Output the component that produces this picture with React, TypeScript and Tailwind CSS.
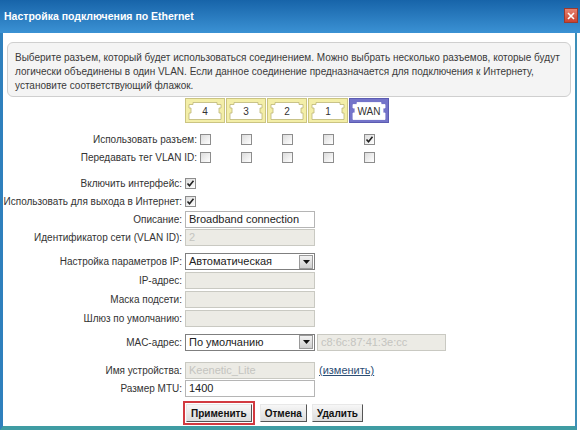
import React from "react";

const Check = ({ checked = false }: { checked?: boolean }) => (
  <span className="w-[11px] h-[11px] border border-[#8d8d8d] bg-gradient-to-br from-[#dcdcdc] to-white flex items-center justify-center">
    {checked && (
      <svg width="9" height="9" viewBox="0 0 9 9">
        <path d="M1.5 4.5 L3.5 6.8 L7.5 1.8" fill="none" stroke="#222" strokeWidth="1.6" />
      </svg>
    )}
  </span>
);

const Port = ({ label, wan = false }: { label: string; wan?: boolean }) => (
  <svg width="40" height="25" viewBox="0 0 40 25">
    <rect x="0.5" y="0.5" width="39" height="24" fill={wan ? "#7474c9" : "#f3eea8"} stroke={wan ? "#5c5cb2" : "#cbc482"} />
    <path
      d="M4 6.5 H8 V4.5 H32 V6.5 H36 V10 H34 V15 H36 V21.5 H4 V15 H6 V10 H4 Z"
      fill="#fff"
      stroke={wan ? "#ffffff" : "#bdb576"}
      strokeWidth="0.8"
    />
    <text x="20" y="17" textAnchor="middle" fontSize="10" fill="#333" fontFamily="Liberation Sans, Arial, sans-serif">
      {label}
    </text>
  </svg>
);

const Input = ({ value = "", disabled = false, w = "w-[130px]" }: { value?: string; disabled?: boolean; w?: string }) => (
  <div
    className={`${w} h-[17px] flex items-center px-[3px] border text-[11px] whitespace-nowrap overflow-hidden ${
      disabled ? "bg-[#ecebe5] border-[#c9c9c2] text-[#c4c4c0]" : "bg-white border-[#b5b5b5] text-[#222]"
    }`}
  >
    {value}
  </div>
);

const Select = ({ value }: { value: string }) => (
  <div className="w-[130px] h-[17px] flex items-center border border-[#7f7f7f] bg-white">
    <span className="flex-1 pl-[3px] text-[11px] text-[#222]">{value}</span>
    <span className="w-[14px] h-[14px] mr-[1px] flex items-center justify-center bg-gradient-to-b from-[#f2f2f2] to-[#cfcfcf] border border-[#9a9a9a]">
      <svg width="7" height="4" viewBox="0 0 7 4">
        <path d="M0 0 H7 L3.5 4 Z" fill="#111" />
      </svg>
    </span>
  </div>
);

const Row = ({ label, h = "h-[18px]", children }: { label: string; h?: string; children?: React.ReactNode }) => (
  <div className={`flex items-center ${h}`}>
    <span className="w-[179px] text-right whitespace-nowrap">{label}</span>
    <div className="ml-[3px] flex items-center gap-[2px]">{children}</div>
  </div>
);

const Button = ({ children }: { children: React.ReactNode }) => (
  <span className="h-[18px] px-[4px] flex items-center font-bold text-[10px] text-[#111] bg-gradient-to-b from-[#f7f7f7] to-[#dcdcdc] border border-t-[#e8e8e8] border-l-[#e8e8e8] border-r-[#555] border-b-[#555]">
    {children}
  </span>
);

const ports = ["4", "3", "2", "1"];

export default function App() {
  return (
    <div className="w-[580px] h-[430px] flex flex-col bg-white overflow-hidden font-['Liberation_Sans',Arial,sans-serif] text-[10px] text-[#333]">
      <div className="h-[33px] shrink-0 flex items-center justify-between pl-[4px] pr-[2px] bg-gradient-to-b from-[#1764a9] to-[#3b92d4]">
        <span className="text-white font-bold text-[10.5px]">Настройка подключения по Ethernet</span>
        <span className="w-[14px] h-[15px] mb-[2px] flex items-center justify-center bg-gradient-to-b from-[#e8826f] to-[#c9402e] border border-[#9c3a2d]">
          <svg width="8" height="8" viewBox="0 0 8 8">
            <path d="M1 1 L7 7 M7 1 L1 7" stroke="#fff" strokeWidth="1.6" />
          </svg>
        </span>
      </div>

      <div className="flex-1 flex flex-col border-l-[3px] border-l-[#2f80bd] border-r-[2px] border-r-[#3d8fb8] border-b-[4px] border-b-[#3f9ca3] mr-[3px]">
        <div className="mt-[9px] ml-[4px] w-[564px] h-[55px] rounded-[6px] border border-[#cfcfcf] bg-[#f4f4f4] pl-[7px] pt-[8px] leading-[14px] whitespace-nowrap text-[#3a3a3a]">
          Выберите разъем, который будет использоваться соединением. Можно выбрать несколько разъемов, которые будут
          <br />
          логически объединены в один VLAN. Если данное соединение предназначается для подключения к Интернету,
          <br />
          установите соответствующий флажок.
        </div>

        <div className="mt-[1px] ml-[182px] flex gap-[1px]">
          {ports.map((p) => (
            <Port key={p} label={p} />
          ))}
          <Port label="WAN" wan />
        </div>

        <div className="mt-[7px] flex flex-col">
          {[
            ["Использовать разъем:", [false, false, false, false, true]],
            ["Передавать тег VLAN ID:", [false, false, false, false, false]],
          ].map(([label, states]) => (
            <div key={label as string} className="flex items-center h-[18px]">
              <span className="w-[194px] text-right whitespace-nowrap">{label as string}</span>
              <div className="ml-[3px] flex">
                {(states as boolean[]).map((s, i) => (
                  <span key={i} className="w-[41px] flex">
                    <Check checked={s} />
                  </span>
                ))}
              </div>
            </div>
          ))}
        </div>

        <div className="mt-[8px] flex flex-col">
          <Row label="Включить интерфейс:">
            <Check checked />
          </Row>
          <Row label="Использовать для выхода в Интернет:">
            <Check checked />
          </Row>
          <Row label="Описание:">
            <Input value="Broadband connection" />
          </Row>
          <Row label="Идентификатор сети (VLAN ID):">
            <Input value="2" disabled />
          </Row>
        </div>

        <div className="mt-[6px] flex flex-col">
          <Row label="Настройка параметров IP:" h="h-[19px]">
            <Select value="Автоматическая" />
          </Row>
          <Row label="IP-адрес:" h="h-[19px]">
            <Input disabled />
          </Row>
          <Row label="Маска подсети:" h="h-[19px]">
            <Input disabled />
          </Row>
          <Row label="Шлюз по умолчанию:" h="h-[19px]">
            <Input disabled />
          </Row>
        </div>

        <div className="mt-[5px]">
          <Row label="MAC-адрес:">
            <Select value="По умолчанию" />
            <Input value="c8:6c:87:41:3e:cc" disabled w="w-[129px]" />
          </Row>
        </div>

        <div className="mt-[10px] flex flex-col">
          <Row label="Имя устройства:">
            <Input value="Keenetic_Lite" disabled />
            <span className="ml-[2px] underline text-[#2c4d74] text-[11px]">(изменить)</span>
          </Row>
          <Row label="Размер MTU:">
            <Input value="1400" />
          </Row>
        </div>

        <div className="mt-[4px] ml-[180px] flex items-center gap-[5px]">
          <span className="p-[1px] border-2 border-[#d23a40]">
            <Button>Применить</Button>
          </span>
          <Button>Отмена</Button>
          <Button>Удалить</Button>
        </div>
      </div>
    </div>
  );
}
